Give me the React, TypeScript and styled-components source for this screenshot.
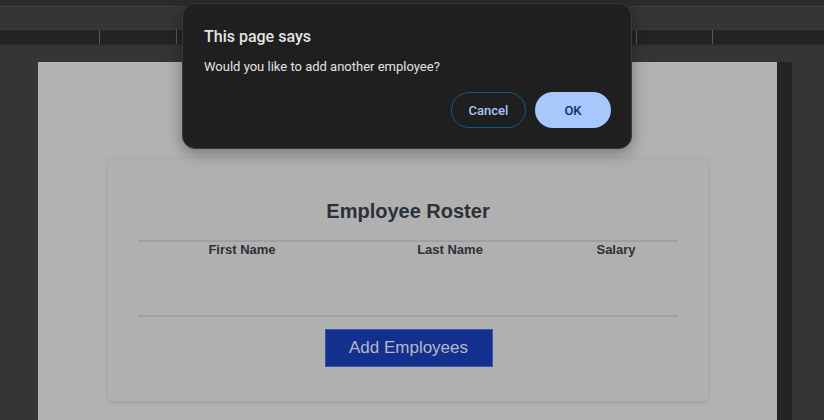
import React from "react";
import styled, { createGlobalStyle } from "styled-components";

const columns = ["First Name", "Last Name", "Salary"];

const GlobalStyle = createGlobalStyle`
  html, body {
    margin: 0;
    padding: 0;
    background-color: #353535;
    overflow: hidden;
  }
`;

export default function App() {
  return (
    <>
      <GlobalStyle />
      <Window>
        <TopStrip />
        <Toolbar />
        <TabRow>
          <TabCell width={100} />
          <TabCell width={77} />
          <TabCell width={460} />
          <TabCell width={76} />
          <TabCell width={111} last />
        </TabRow>
        <Gap />
        <Viewport>
          <Page>
            <Card>
              <Title>Employee Roster</Title>
              <Table>
                <HeaderRow>
                  {columns.map((column) => (
                    <HeaderCell key={column}>{column}</HeaderCell>
                  ))}
                </HeaderRow>
              </Table>
              <ButtonRow>
                <AddButton>Add Employees</AddButton>
              </ButtonRow>
            </Card>
          </Page>
          <Scrollbar />
        </Viewport>
        <Dialog>
          <DialogTitle>This page says</DialogTitle>
          <DialogMessage>Would you like to add another employee?</DialogMessage>
          <DialogActions>
            <CancelButton>Cancel</CancelButton>
            <OkButton>OK</OkButton>
          </DialogActions>
        </Dialog>
      </Window>
    </>
  );
}

const Window = styled.div`
  position: relative;
  width: 824px;
  height: 420px;
  display: flex;
  flex-direction: column;
  background-color: #353535;
  overflow: hidden;
`;

const TopStrip = styled.div`
  height: 6px;
  background-color: #2b2b2b;
  border-bottom: 1px solid #404040;
`;

const Toolbar = styled.div`
  height: 22px;
  background-color: #353535;
  border-bottom: 1px solid #3d3d3d;
`;

const TabRow = styled.div`
  height: 14px;
  display: flex;
  background-color: #232326;
  border-bottom: 1px solid #2b2b2d;
`;

const TabCell = styled.div<{ width: number; last?: boolean }>`
  width: ${(props) => props.width}px;
  flex: ${(props) => (props.last ? 1 : "none")};
  border-right: ${(props) => (props.last ? "none" : "1px solid #5a5a5c")};
  box-sizing: border-box;
`;

const Gap = styled.div`
  height: 17px;
`;

const Viewport = styled.div`
  flex: 1;
  display: flex;
  padding-left: 38px;
`;

const Page = styled.div`
  width: 739px;
  background-color: #b1b2b3;
  padding: 97px 0 0 70px;
  box-sizing: border-box;
`;

const Scrollbar = styled.div`
  width: 15px;
  background-color: #232426;
`;

const Card = styled.div`
  width: 600px;
  height: 242px;
  box-sizing: border-box;
  padding: 40px 30px 0;
  background-color: #b0b0b0;
  border-radius: 4px;
  box-shadow: 0 1px 5px rgba(0, 0, 0, 0.12);
  font-family: "Liberation Sans", Arial, sans-serif;
`;

const Title = styled.h2`
  margin: 0 0 17px;
  font-size: 20px;
  line-height: 24px;
  font-weight: bold;
  text-align: center;
  color: #2b3138;
`;

const Table = styled.div`
  height: 77px;
  border-top: 2px solid #a0a0a0;
  border-bottom: 2px solid #a0a0a0;
  box-sizing: border-box;
`;

const HeaderRow = styled.div`
  display: grid;
  grid-template-columns: 208px 208px 124px;
`;

const HeaderCell = styled.div`
  text-align: center;
  font-size: 13px;
  line-height: 16px;
  font-weight: bold;
  color: #2b3138;
`;

const ButtonRow = styled.div`
  display: flex;
  justify-content: center;
  padding-top: 12px;
  padding-left: 1px;
`;

const AddButton = styled.button`
  width: 168px;
  height: 38px;
  background-color: #14308f;
  border: 1px solid #3b56a8;
  color: #b5b9c5;
  font-family: "Liberation Sans", Arial, sans-serif;
  font-size: 17px;
  padding: 0;
  cursor: pointer;
`;

const Dialog = styled.div`
  position: absolute;
  left: 182px;
  top: 3px;
  width: 450px;
  height: 146px;
  box-sizing: border-box;
  padding: 23px 20px 0 21px;
  background-color: #1f1f1f;
  border: 1px solid #3a3a3a;
  border-radius: 13px;
  box-shadow: 0 4px 16px rgba(0, 0, 0, 0.35);
  font-family: Roboto, "Noto Sans", sans-serif;
  display: flex;
  flex-direction: column;
`;

const DialogTitle = styled.div`
  font-size: 16px;
  line-height: 20px;
  font-weight: 500;
  color: #e3e3e3;
`;

const DialogMessage = styled.div`
  margin-top: 11px;
  font-size: 13px;
  line-height: 18px;
  color: #e3e3e3;
`;

const DialogActions = styled.div`
  display: flex;
  justify-content: flex-end;
  gap: 9px;
  margin-top: 16px;
`;

const CancelButton = styled.button`
  width: 75px;
  height: 36px;
  border-radius: 18px;
  background: transparent;
  border: 1px solid #0b5e8c;
  color: #a8c7fa;
  font-family: Roboto, "Noto Sans", sans-serif;
  font-size: 13px;
  font-weight: 500;
  padding: 0;
`;

const OkButton = styled.button`
  width: 76px;
  height: 36px;
  border-radius: 18px;
  background-color: #a8c7fa;
  border: none;
  color: #062e6f;
  font-family: Roboto, "Noto Sans", sans-serif;
  font-size: 13px;
  font-weight: 500;
  padding: 0;
`;
